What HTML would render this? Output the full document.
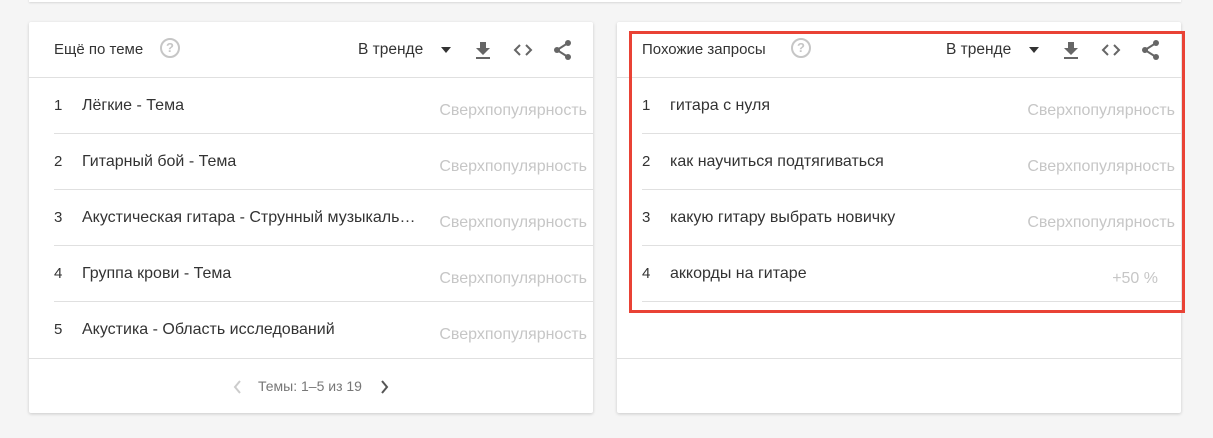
<!DOCTYPE html>
<html><head><meta charset="utf-8"><style>
*{margin:0;padding:0;box-sizing:border-box}
body{width:1213px;height:438px;background:#f5f5f5;font-family:"Liberation Sans",Arial,sans-serif;position:relative;overflow:hidden;color:#222}
.top{position:absolute;left:29px;top:-10px;width:1152px;height:12px;background:#fff;box-shadow:0 1px 2px rgba(0,0,0,.12)}
.card{position:absolute;top:22px;width:564px;height:391px;background:#fff;border-radius:2px;box-shadow:0 1px 3px rgba(0,0,0,.18)}
.hdr{position:absolute;left:0;top:0;width:100%;height:56px;border-bottom:1px solid #e0e0e0}
.title{position:absolute;left:25px;top:19px;font-size:15px;color:#333}
.help{position:absolute;top:16px;width:20px;height:20px;border:2px solid #c6c6c6;border-radius:50%;color:#c6c6c6;font-size:13px;font-weight:bold;text-align:center;line-height:16px}
.trend{position:absolute;top:19px;font-size:15.5px;color:#333}
.tri{position:absolute;top:25px;width:0;height:0;border-left:5px solid transparent;border-right:5px solid transparent;border-top:6px solid #333}
.ic{position:absolute;top:17px}
.row{position:absolute;height:56px;border-bottom:1px solid #e0e0e0}
.n{position:absolute;left:0;top:19px;font-size:15px;color:#333}
.t{position:absolute;left:28px;top:19px;font-size:16px;color:#333;white-space:nowrap}
.s{position:absolute;right:6px;top:24px;font-size:16px;color:#c6c6c6}
.foot{position:absolute;left:0;top:336px;width:100%;border-top:1px solid #e0e0e0}
</style></head><body>
<div class="top"></div>

<div class="card" style="left:29px">
 <div class="hdr">
  <div class="title">Ещё по теме</div>
  <div class="help" style="left:131px">?</div>
  <div class="trend" style="left:329px">В тренде</div>
  <div class="tri" style="left:412px"></div>
  <svg class="ic" style="left:444px" width="20" height="22" viewBox="0 0 20 22"><path d="M7 3h6v6h4l-7 7-7-7h4z" fill="#666"/><rect x="3" y="18" width="14" height="2" fill="#666"/></svg>
  <svg class="ic" style="left:483px" width="22" height="22" viewBox="0 0 22 22"><path d="M8 6l-5 5 5 5M14 6l5 5-5 5" fill="none" stroke="#666" stroke-width="2"/></svg>
  <svg class="ic" style="left:523px" width="22" height="22" viewBox="0 0 22 22"><path d="M16 4L5 11l11 7" fill="none" stroke="#666" stroke-width="2"/><circle cx="16" cy="4" r="3" fill="#666"/><circle cx="5" cy="11" r="3" fill="#666"/><circle cx="16" cy="18" r="3" fill="#666"/></svg>
 </div>
 <div class="row" style="left:25px;top:56px;width:539px"><span class="n">1</span><span class="t">Лёгкие - Тема</span><span class="s">Сверхпопулярность</span></div>
 <div class="row" style="left:25px;top:112px;width:539px"><span class="n">2</span><span class="t">Гитарный бой - Тема</span><span class="s">Сверхпопулярность</span></div>
 <div class="row" style="left:25px;top:168px;width:539px"><span class="n">3</span><span class="t" style="width:335px;overflow:hidden;text-overflow:ellipsis">Акустическая гитара - Струнный музыкальный инструмент</span><span class="s">Сверхпопулярность</span></div>
 <div class="row" style="left:25px;top:224px;width:539px"><span class="n">4</span><span class="t">Группа крови - Тема</span><span class="s">Сверхпопулярность</span></div>
 <div class="row" style="left:25px;top:280px;width:539px;border:none"><span class="n">5</span><span class="t">Акустика - Область исследований</span><span class="s">Сверхпопулярность</span></div>
 <div class="foot">
  <svg style="position:absolute;left:203px;top:20px" width="10" height="16" viewBox="0 0 10 16"><path d="M8 2L3 8l5 6" fill="none" stroke="#ccc" stroke-width="2"/></svg>
  <span style="position:absolute;left:229px;top:19px;font-size:14px;color:#777">Темы: 1–5 из 19</span>
  <svg style="position:absolute;left:351px;top:20px" width="10" height="16" viewBox="0 0 10 16"><path d="M2 2l5 6-5 6" fill="none" stroke="#555" stroke-width="2"/></svg>
 </div>
</div>

<div class="card" style="left:617px">
 <div class="hdr">
  <div class="title">Похожие запросы</div>
  <div class="help" style="left:174px">?</div>
  <div class="trend" style="left:329px">В тренде</div>
  <div class="tri" style="left:412px"></div>
  <svg class="ic" style="left:444px" width="20" height="22" viewBox="0 0 20 22"><path d="M7 3h6v6h4l-7 7-7-7h4z" fill="#666"/><rect x="3" y="18" width="14" height="2" fill="#666"/></svg>
  <svg class="ic" style="left:483px" width="22" height="22" viewBox="0 0 22 22"><path d="M8 6l-5 5 5 5M14 6l5 5-5 5" fill="none" stroke="#666" stroke-width="2"/></svg>
  <svg class="ic" style="left:523px" width="22" height="22" viewBox="0 0 22 22"><path d="M16 4L5 11l11 7" fill="none" stroke="#666" stroke-width="2"/><circle cx="16" cy="4" r="3" fill="#666"/><circle cx="5" cy="11" r="3" fill="#666"/><circle cx="16" cy="18" r="3" fill="#666"/></svg>
 </div>
 <div class="row" style="left:25px;top:56px;width:539px"><span class="n">1</span><span class="t">гитара с нуля</span><span class="s">Сверхпопулярность</span></div>
 <div class="row" style="left:25px;top:112px;width:539px"><span class="n">2</span><span class="t">как научиться подтягиваться</span><span class="s">Сверхпопулярность</span></div>
 <div class="row" style="left:25px;top:168px;width:539px"><span class="n">3</span><span class="t">какую гитару выбрать новичку</span><span class="s">Сверхпопулярность</span></div>
 <div class="row" style="left:25px;top:224px;width:539px"><span class="n">4</span><span class="t">аккорды на гитаре</span><span class="s" style="right:23px">+50 %</span></div>
 <div class="foot"></div>
</div>

<div style="position:absolute;left:629px;top:31px;width:556px;height:282px;border:3px solid #e94235"></div>
</body></html>
